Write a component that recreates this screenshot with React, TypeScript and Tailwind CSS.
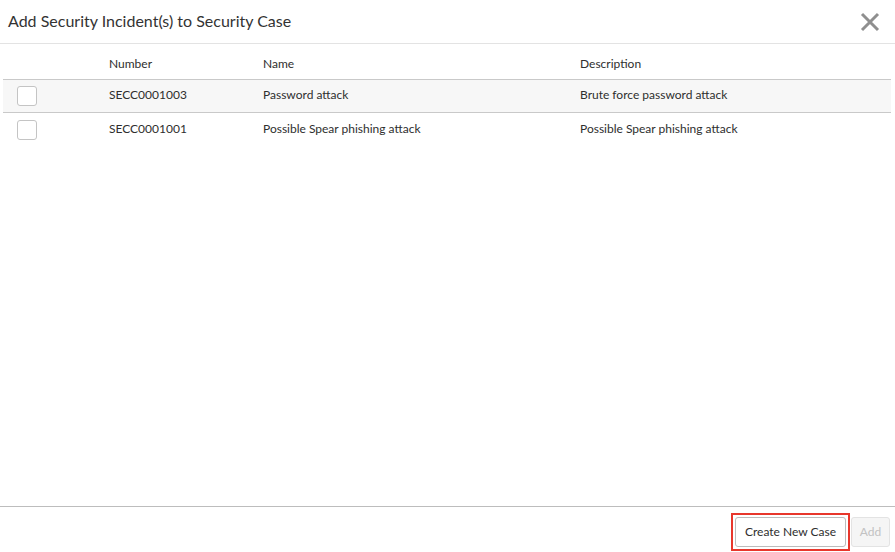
import React from "react";

type Incident = { number: string; name: string; description: string };

const rows: Incident[] = [
  { number: "SECC0001003", name: "Password attack", description: "Brute force password attack" },
  { number: "SECC0001001", name: "Possible Spear phishing attack", description: "Possible Spear phishing attack" },
];

function CloseIcon() {
  return (
    <svg width="20" height="20" viewBox="0 0 20 20" aria-hidden="true">
      <path d="M2 2 L18 18 M18 2 L2 18" stroke="#8f8f8f" strokeWidth="3" strokeLinecap="butt" />
    </svg>
  );
}

export default function App() {
  return (
    <div
      className="flex h-[552px] w-[895px] flex-col bg-white text-[#2e2e2e]"
      style={{ fontFamily: "Lato, 'Open Sans', sans-serif" }}
    >
      {/* modal header */}
      <div className="flex h-[44px] shrink-0 items-center justify-between border-b border-[#e3e3e3] pl-[8px] pr-[15px]">
        <h1 className="-mt-[2px] text-[16px] leading-none text-[#333333]">Add Security Incident(s) to Security Case</h1>
        <button className="flex h-[20px] w-[20px] items-center justify-center">
          <CloseIcon />
        </button>
      </div>

      {/* incident list */}
      <div className="flex-1 pl-[3px] pr-[4px]">
        <div className="grid h-[36px] grid-cols-[106px_154px_317px_1fr] items-center border-b border-[#c9c9c9] pt-[5px] text-[12px]">
          <div />
          <div>Number</div>
          <div>Name</div>
          <div>Description</div>
        </div>
        {rows.map((r, i) => (
          <div
            key={r.number}
            className={`grid h-[33px] grid-cols-[106px_154px_317px_1fr] items-center border-b border-[#c9c9c9] text-[12px] ${
              i === 0 ? "bg-[#f7f7f7]" : "bg-white"
            } ${i === rows.length - 1 ? "border-b-0" : ""}`}
          >
            <div className="pl-[14px]">
              <div className="h-[20px] w-[20px] rounded-[3px] border border-[#c4c4c4] bg-white" />
            </div>
            <div className="pb-[2px]">{r.number}</div>
            <div className="pb-[2px]">{r.name}</div>
            <div className="pb-[2px]">{r.description}</div>
          </div>
        ))}
      </div>

      {/* modal footer */}
      <div className="flex h-[46px] shrink-0 items-start justify-end gap-[1px] border-t border-[#bdbdbd] pr-[5px] pt-[6px]">
        <div className="border-2 border-[#e8372c] p-[2px]">
          <button className="h-[30px] w-[111px] rounded-[3px] border border-[#bcbcbc] bg-white text-[12px] text-[#2e2e2e]">
            Create New Case
          </button>
        </div>
        <button className="mt-[4px] h-[30px] w-[39px] rounded-[3px] border border-[#e3e3e3] bg-[#f5f5f5] text-[12px] text-[#c2c2c2]">
          Add
        </button>
      </div>
    </div>
  );
}
